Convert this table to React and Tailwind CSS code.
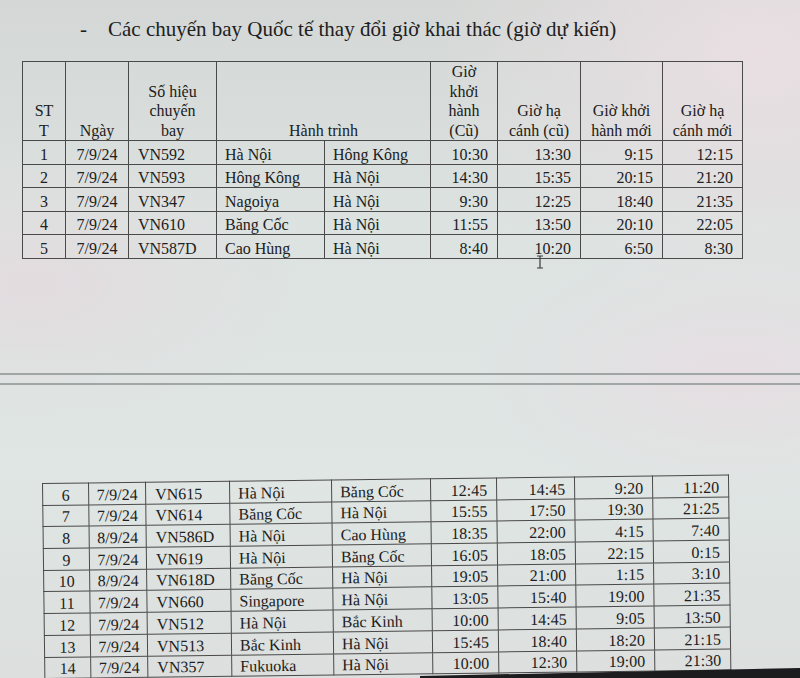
const rowsA = [
  ["1", "7/9/24", "VN592", "Hà Nội", "Hông Kông", "10:30", "13:30", "9:15", "12:15"],
  ["2", "7/9/24", "VN593", "Hông Kông", "Hà Nội", "14:30", "15:35", "20:15", "21:20"],
  ["3", "7/9/24", "VN347", "Nagoiya", "Hà Nội", "9:30", "12:25", "18:40", "21:35"],
  ["4", "7/9/24", "VN610", "Băng Cốc", "Hà Nội", "11:55", "13:50", "20:10", "22:05"],
  ["5", "7/9/24", "VN587D", "Cao Hùng", "Hà Nội", "8:40", "10:20", "6:50", "8:30"],
];

const rowsB = [
  ["6", "7/9/24", "VN615", "Hà Nội", "Băng Cốc", "12:45", "14:45", "9:20", "11:20"],
  ["7", "7/9/24", "VN614", "Băng Cốc", "Hà Nội", "15:55", "17:50", "19:30", "21:25"],
  ["8", "8/9/24", "VN586D", "Hà Nội", "Cao Hùng", "18:35", "22:00", "4:15", "7:40"],
  ["9", "7/9/24", "VN619", "Hà Nội", "Băng Cốc", "16:05", "18:05", "22:15", "0:15"],
  ["10", "8/9/24", "VN618D", "Băng Cốc", "Hà Nội", "19:05", "21:00", "1:15", "3:10"],
  ["11", "7/9/24", "VN660", "Singapore", "Hà Nội", "13:05", "15:40", "19:00", "21:35"],
  ["12", "7/9/24", "VN512", "Hà Nội", "Bắc Kinh", "10:00", "14:45", "9:05", "13:50"],
  ["13", "7/9/24", "VN513", "Bắc Kinh", "Hà Nội", "15:45", "18:40", "18:20", "21:15"],
  ["14", "7/9/24", "VN357", "Fukuoka", "Hà Nội", "10:00", "12:30", "19:00", "21:30"],
];

const colsA = [43, 63, 88, 108, 106, 67, 83, 82, 80];
const colsB = [46, 57, 84, 102, 99, 66, 78, 78, 76];

const cellAlign = [
  "text-center",
  "text-center",
  "text-left pl-[9px]",
  "text-left pl-[8px]",
  "text-left pl-[8px]",
  "text-right pr-[9px]",
  "text-right pr-[9px]",
  "text-right pr-[9px]",
  "text-right pr-[9px]",
];

function DataRow({ row, h }) {
  return (
    <tr className={h}>
      {row.map((v, i) => (
        <td
          key={i}
          className={`border border-[#4a4a4a] align-bottom leading-[18px] whitespace-nowrap ${cellAlign[i]}`}
        >
          {v}
        </td>
      ))}
    </tr>
  );
}

function Cursor() {
  return (
    <svg
      className="absolute left-[535px] top-[255px]"
      width="10"
      height="14"
      viewBox="0 0 10 14"
    >
      <path d="M2 1h6M5 1v12M2 13h6" stroke="#3a3a3a" strokeWidth="1.2" fill="none" />
    </svg>
  );
}

export default function App() {
  const th = "border border-[#4a4a4a] align-bottom text-center leading-[19.5px] font-normal pb-0";

  return (
    <div className="relative w-[800px] h-[678px] overflow-hidden text-[#202020] font-['Liberation_Serif','Times_New_Roman',serif] bg-[#dce2df] bg-[radial-gradient(ellipse_at_95%_8%,#e9dfe3_0%,transparent_30%),radial-gradient(ellipse_at_4%_42%,#e3dcdf_0%,transparent_25%),radial-gradient(ellipse_at_92%_55%,#e6dee2_0%,transparent_25%),linear-gradient(180deg,#d4d7d5_0%,#dce3e1_35%,#dfe6e4_70%,#dcdfdd_100%)]">
      <div className="flex items-baseline pl-[80px] pt-[14px] text-[21px] leading-[30px]">
        <span className="w-[28px]">-</span>
        <span>Các chuyến bay Quốc tế thay đổi giờ khai thác (giờ dự kiến)</span>
      </div>

      <table className="ml-[22px] mt-[17px] border-collapse table-fixed text-[16px] w-[720px]">
        <colgroup>
          {colsA.map((w, i) => (
            <col key={i} style={{ width: w }} />
          ))}
        </colgroup>
        <thead>
          <tr className="h-[78px]">
            <th className={th}>ST<br />T</th>
            <th className={th}>Ngày</th>
            <th className={th}>Số hiệu<br />chuyến<br />bay</th>
            <th className={th} colSpan={2}>Hành trình</th>
            <th className={th}>Giờ<br />khởi<br />hành<br />(Cũ)</th>
            <th className={th}>Giờ hạ<br />cánh (cũ)</th>
            <th className={th}>Giờ khởi<br />hành mới</th>
            <th className={th}>Giờ hạ<br />cánh mới</th>
          </tr>
        </thead>
        <tbody>
          {rowsA.map((r) => (
            <DataRow key={r[0]} row={r} h="h-[23.6px]" />
          ))}
        </tbody>
      </table>

      <div className="mt-[114px] h-[2px] bg-[#a0a6a4]" />
      <div className="mt-[8px] h-[2px] bg-[#a0a6a4]" />

      <table className="ml-[42px] mt-[98px] border-collapse table-fixed text-[16px] w-[686px] rotate-[-0.7deg] origin-top-left">
        <colgroup>
          {colsB.map((w, i) => (
            <col key={i} style={{ width: w }} />
          ))}
        </colgroup>
        <tbody>
          {rowsB.map((r) => (
            <DataRow key={r[0]} row={r} h="h-[21.7px]" />
          ))}
        </tbody>
      </table>

      <Cursor />

      <div className="absolute left-[420px] right-0 bottom-0 h-[10px] bg-[#1c1c1e] [clip-path:polygon(0_80%,100%_0,100%_100%,0_100%)]" />
    </div>
  );
}
